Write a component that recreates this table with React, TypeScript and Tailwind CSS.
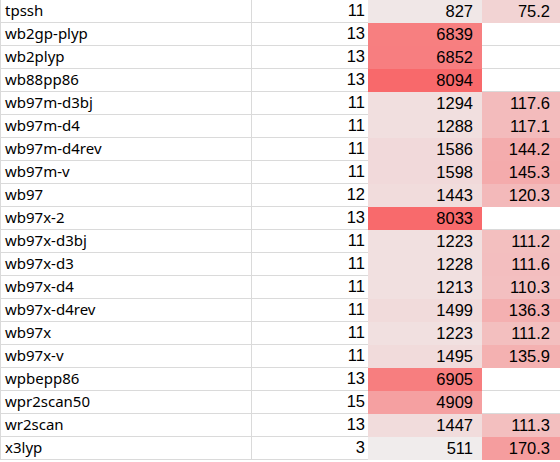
const rows: [string, number, number, number | null][] = [
  ["tpssh", 11, 827, 75.2],
  ["wb2gp-plyp", 13, 6839, null],
  ["wb2plyp", 13, 6852, null],
  ["wb88pp86", 13, 8094, null],
  ["wb97m-d3bj", 11, 1294, 117.6],
  ["wb97m-d4", 11, 1288, 117.1],
  ["wb97m-d4rev", 11, 1586, 144.2],
  ["wb97m-v", 11, 1598, 145.3],
  ["wb97", 12, 1443, 120.3],
  ["wb97x-2", 13, 8033, null],
  ["wb97x-d3bj", 11, 1223, 111.2],
  ["wb97x-d3", 11, 1228, 111.6],
  ["wb97x-d4", 11, 1213, 110.3],
  ["wb97x-d4rev", 11, 1499, 136.3],
  ["wb97x", 11, 1223, 111.2],
  ["wb97x-v", 11, 1495, 135.9],
  ["wpbepp86", 13, 6905, null],
  ["wpr2scan50", 15, 4909, null],
  ["wr2scan", 13, 1447, 111.3],
  ["x3lyp", 3, 511, 170.3],
];

// light grey-pink -> excel red
function scale(t: number) {
  const k = Math.max(0, Math.min(1, t));
  const r = Math.round(240 + 8 * k);
  const g = Math.round(238 - 133 * k);
  const b = Math.round(238 - 131 * k);
  return `rgb(${r},${g},${b})`;
}

const countColor = (v: number) => scale((v - 400) / (8094 - 400));
const ratioColor = (v: number) => scale(((v - 27.7) * 0.568) / 133);

const num = "font-['Liberation_Sans',Arial,sans-serif] text-[16.5px]";

export default function App() {
  return (
    <div className="h-[462px] w-[560px] overflow-hidden bg-white text-black">
      <div className="grid grid-cols-[252px_116px_114px_78px]">
        {rows.map(([name, n, count, ratio]) => (
          <div key={name} className="contents">
            <div className="flex h-[23px] items-center border-b border-l border-r border-[#dadada] pl-[4px] pb-px font-['Noto_Sans',sans-serif] text-[15px]">
              {name}
            </div>
            <div className={`flex h-[23px] items-center justify-end border-b border-[#dadada] pr-[3px] pb-px ${num}`}>
              {n}
            </div>
            <div
              className={`flex h-[23px] items-center justify-end pr-[9px] ${num}`}
              style={{ backgroundColor: countColor(count) }}
            >
              {count}
            </div>
            {ratio === null ? (
              <div className="h-[23px] border-b border-[#dadada]" />
            ) : (
              <div
                className={`flex h-[23px] items-center justify-end pr-[10px] ${num}`}
                style={{ backgroundColor: ratioColor(ratio) }}
              >
                {ratio.toFixed(1)}
              </div>
            )}
          </div>
        ))}
      </div>
    </div>
  );
}
